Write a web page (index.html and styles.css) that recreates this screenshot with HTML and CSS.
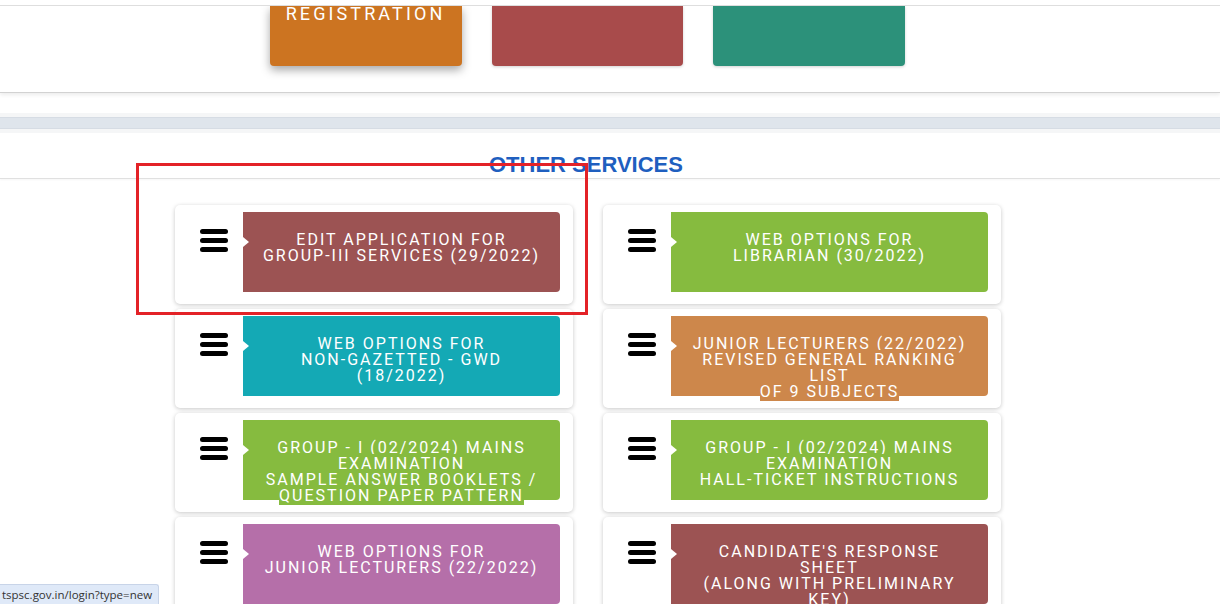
FILE: index.html
```html
<!DOCTYPE html>
<html>
<head>
<meta charset="utf-8">
<title>Other Services</title>
<link rel="stylesheet" href="styles.css">
</head>
<body>
<div class="topbar"></div>
<section class="tiles-sec">
  <div class="tiles-wrap">
    <div class="tile tile-orange">REGISTRATION</div>
    <div class="tile tile-red tile-mid"></div>
    <div class="tile tile-green"></div>
  </div>
</section>
<div class="spacer"></div>
<div class="band"><div class="band-inner"></div></div>
<section class="services">
  <div class="services-head"><h2>OTHER SERVICES</h2></div>
  <div class="grid">
    <div class="card"><div class="ico"><svg width="28" height="23" viewBox="0 0 28 23"><rect x="0" y="0" width="28" height="5" rx="2.5"/><rect x="0" y="9" width="28" height="5" rx="2.5"/><rect x="0" y="18" width="28" height="5" rx="2.5"/></svg></div>
      <div class="box c-brown"><span>EDIT APPLICATION FOR<br>GROUP-III SERVICES (29/2022)</span></div></div>
    <div class="card"><div class="ico"><svg width="28" height="23" viewBox="0 0 28 23"><rect x="0" y="0" width="28" height="5" rx="2.5"/><rect x="0" y="9" width="28" height="5" rx="2.5"/><rect x="0" y="18" width="28" height="5" rx="2.5"/></svg></div>
      <div class="box c-green"><span>WEB OPTIONS FOR<br>LIBRARIAN (30/2022)</span></div></div>
    <div class="card"><div class="ico"><svg width="28" height="23" viewBox="0 0 28 23"><rect x="0" y="0" width="28" height="5" rx="2.5"/><rect x="0" y="9" width="28" height="5" rx="2.5"/><rect x="0" y="18" width="28" height="5" rx="2.5"/></svg></div>
      <div class="box c-teal"><span>WEB OPTIONS FOR<br>NON-GAZETTED - GWD<br>(18/2022)</span></div></div>
    <div class="card"><div class="ico"><svg width="28" height="23" viewBox="0 0 28 23"><rect x="0" y="0" width="28" height="5" rx="2.5"/><rect x="0" y="9" width="28" height="5" rx="2.5"/><rect x="0" y="18" width="28" height="5" rx="2.5"/></svg></div>
      <div class="box c-tan"><span>JUNIOR LECTURERS (22/2022)<br>REVISED GENERAL RANKING<br>LIST<br>OF 9 SUBJECTS</span></div></div>
    <div class="card"><div class="ico"><svg width="28" height="23" viewBox="0 0 28 23"><rect x="0" y="0" width="28" height="5" rx="2.5"/><rect x="0" y="9" width="28" height="5" rx="2.5"/><rect x="0" y="18" width="28" height="5" rx="2.5"/></svg></div>
      <div class="box c-green"><span>GROUP - I (02/2024) MAINS<br>EXAMINATION<br>SAMPLE ANSWER BOOKLETS /<br>QUESTION PAPER PATTERN</span></div></div>
    <div class="card"><div class="ico"><svg width="28" height="23" viewBox="0 0 28 23"><rect x="0" y="0" width="28" height="5" rx="2.5"/><rect x="0" y="9" width="28" height="5" rx="2.5"/><rect x="0" y="18" width="28" height="5" rx="2.5"/></svg></div>
      <div class="box c-green"><span>GROUP - I (02/2024) MAINS<br>EXAMINATION<br>HALL-TICKET INSTRUCTIONS</span></div></div>
    <div class="card"><div class="ico"><svg width="28" height="23" viewBox="0 0 28 23"><rect x="0" y="0" width="28" height="5" rx="2.5"/><rect x="0" y="9" width="28" height="5" rx="2.5"/><rect x="0" y="18" width="28" height="5" rx="2.5"/></svg></div>
      <div class="box c-purple"><span>WEB OPTIONS FOR<br>JUNIOR LECTURERS (22/2022)</span></div></div>
    <div class="card"><div class="ico"><svg width="28" height="23" viewBox="0 0 28 23"><rect x="0" y="0" width="28" height="5" rx="2.5"/><rect x="0" y="9" width="28" height="5" rx="2.5"/><rect x="0" y="18" width="28" height="5" rx="2.5"/></svg></div>
      <div class="box c-brown"><span>CANDIDATE'S RESPONSE<br>SHEET<br>(ALONG WITH PRELIMINARY<br>KEY)</span></div></div>
  </div>
</section>
<div class="annot"></div>
<div class="status">tspsc.gov.in/login?type=new</div>
</body>
</html>
```
FILE: styles.css
```css
html, body {
  margin: 0;
  padding: 0;
}
body {
  width: 1220px;
  height: 604px;
  overflow: hidden;
  background: #fff;
  font-family: Roboto, "Liberation Sans", sans-serif;
  position: relative;
}
.topbar {
  height: 5px;
  border-bottom: 1px solid #dedede;
  position: relative;
  z-index: 2;
  background: #fff;
}
.tiles-sec {
  height: 86px;
  border-bottom: 1px solid #d2d2d2;
  box-shadow: 0 2px 4px rgba(0, 0, 0, 0.08);
  position: relative;
  z-index: 1;
  background: #fff;
}
.tiles-wrap {
  width: 1174px;
  display: flex;
  justify-content: center;
  gap: 30px;
}
.tile {
  width: 192px;
  height: 60px;
  border-radius: 0 0 4px 4px;
  box-shadow: 0 1px 3px rgba(0, 0, 0, 0.18);
  color: #fff;
  text-align: center;
  font-size: 18px;
  line-height: 16px;
  letter-spacing: 3.1px;
}
.tile-mid { width: 191px; }
.tile-orange {
  background: #cc7421;
  box-shadow: 0 4px 10px rgba(0, 0, 0, 0.35);
}
.tile-red { background: #a84b4b; }
.tile-green { background: #2c917a; }
.spacer { height: 20px; }
.band {
  background: #f5f6f7;
  padding: 4px 0;
}
.band-inner {
  height: 10px;
  background: #dfe5ec;
  border-top: 1px solid #d6dce4;
  border-bottom: 1px solid #d6dce4;
}
.services-head {
  padding-top: 19px;
  border-bottom: 1px solid #e0e0e0;
  box-shadow: 0 1px 2px rgba(0, 0, 0, 0.04);
}
.services-head h2 {
  margin: 0;
  width: 1172px;
  text-align: center;
  font-family: "Liberation Sans", Arial, sans-serif;
  font-weight: bold;
  font-size: 22px;
  line-height: 26px;
  color: #1f5fbf;
}
.grid {
  width: 1176px;
  padding-top: 26px;
  display: grid;
  grid-template-columns: 398px 398px;
  column-gap: 30px;
  row-gap: 5px;
  justify-content: center;
}
.card {
  height: 99px;
  box-sizing: border-box;
  background: #fff;
  border-radius: 5px;
  box-shadow: 0 1px 4px rgba(0, 0, 0, 0.22);
  display: flex;
  padding: 7px 13px 0 25px;
}
.ico {
  width: 43px;
  padding-top: 17px;
}
.ico svg { display: block; fill: #000; }
.box {
  position: relative;
  width: 317px;
  height: 80px;
  box-sizing: border-box;
  padding: 20px 4px 0;
  border-radius: 0 4px 4px 0;
  text-align: center;
  color: #fff;
  font-size: 16px;
  line-height: 16px;
  letter-spacing: 2px;
  white-space: nowrap;
}
.box span { background-color: inherit; }
.box::before {
  content: "";
  position: absolute;
  left: 0;
  top: 25px;
  border-left: 6px solid #fff;
  border-top: 5px solid transparent;
  border-bottom: 5px solid transparent;
}
.c-brown { background-color: #9c5353; }
.c-green { background-color: #86bb3f; }
.c-teal { background-color: #14a9b5; }
.c-tan { background-color: #cd874b; }
.c-purple { background-color: #b56fa9; }
.annot {
  position: absolute;
  left: 136px;
  top: 163px;
  width: 452px;
  height: 152px;
  box-sizing: border-box;
  border: 3px solid #e32227;
  z-index: 5;
}
.status {
  position: absolute;
  left: 0;
  bottom: 0;
  height: 20px;
  box-sizing: border-box;
  padding: 2px 6px 0 2px;
  background: #dfe9f8;
  border-top: 1px solid #c8d4e8;
  border-right: 1px solid #c8d4e8;
  border-top-right-radius: 3px;
  font-family: "Open Sans", "Liberation Sans", sans-serif;
  font-size: 11.5px;
  line-height: 16px;
  color: #333;
  z-index: 6;
}
```
